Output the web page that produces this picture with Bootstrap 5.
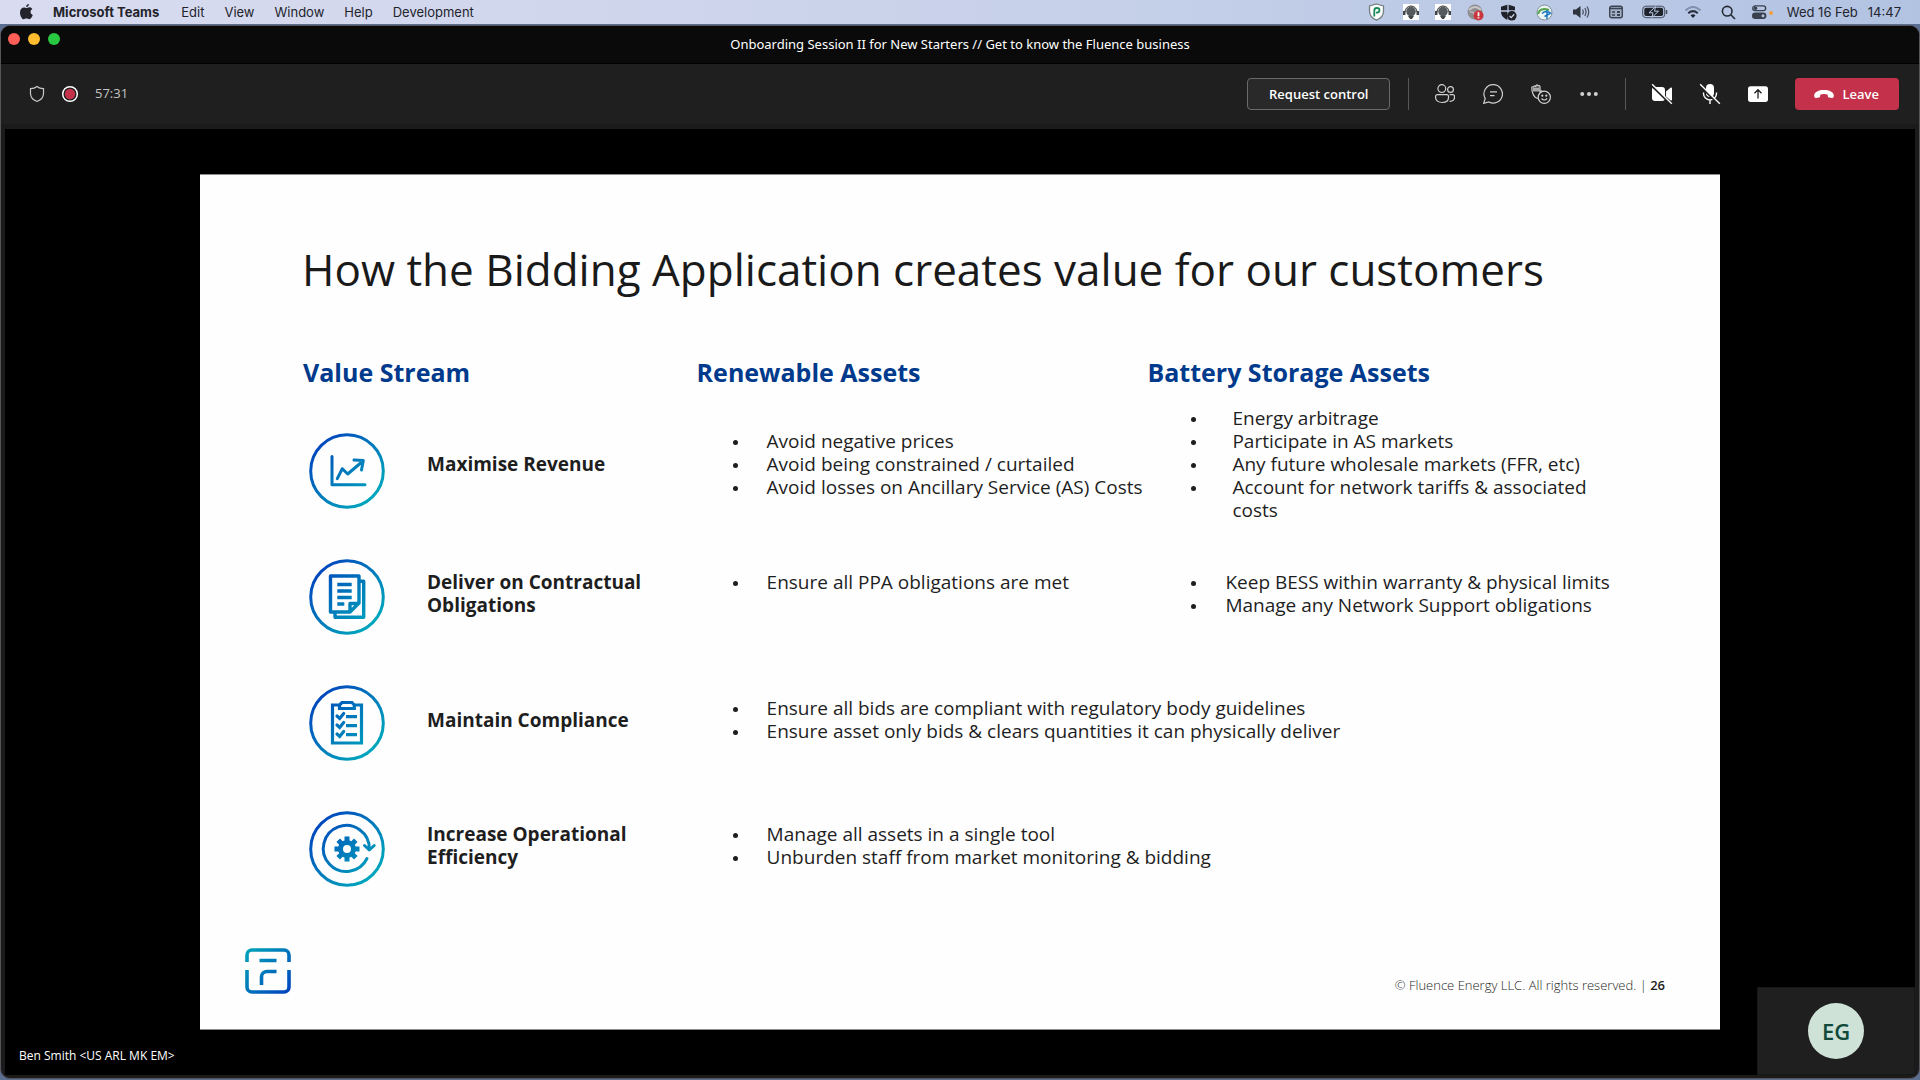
<!DOCTYPE html>
<html lang="en">
<head>
<meta charset="utf-8">
<meta name="viewport" content="width=device-width, initial-scale=1">
<title>Onboarding Session II for New Starters</title>
<link href="https://cdn.jsdelivr.net/npm/bootstrap@5.3.0/dist/css/bootstrap.min.css" rel="stylesheet">
<style>
body { font-family: "Open Sans", "Noto Sans", sans-serif; background: #5b6f93; }
.mac-menu { height: 24px; padding: 0 19px 0 18px; background: linear-gradient(90deg, #d9dcf0, #c9d2ea 50%, #b2c3e2); font: 13px/24px Inter, sans-serif; color: #23242b; }
.mac-menu nav { gap: 20px; margin-left: 19px; }
.mac-menu a { color: inherit; text-decoration: none; }
.mac-menu a.fw-bold { margin-right: 2px; }
.mac-menu svg { display: block; }
.mac-status { gap: 16px; }
.mac-status .near { margin-left: 3px; }
.mac-status .guard { margin-right: 2px; }
.mac-clock { gap: 10px; margin-left: -2px; }
.app-window { background: #1b1b1b; border: 1px solid #55565a; border-radius: 10px; margin-top: 1px; overflow: hidden; }
.title-strip { height: 38px; background: #0a0a0a; border-bottom: 1px solid #000; font-family: "Noto Sans", sans-serif; font-size: 13px; color: #fff; }
.lights { left: 7px; top: 7px; gap: 8px; }
.lights button { width: 12px; height: 12px; border: 0; padding: 0; border-radius: 50%; }
.call-bar { height: 60px; padding: 0 20px 0 28px; background: #1f1f1f; font-size: 13px; color: #c4c4c4; }
.tool-btn { width: 48px; height: 32px; padding: 0; border: 0; background: none; color: #d0d0d0; display: flex; align-items: center; justify-content: center; }
.tool-btn.solid { color: #fff; }
.rule { width: 1px; height: 32px; background: #575757; margin: 0 12px; }
.btn-request, .btn-leave { height: 32px; font-size: 13px; font-weight: 600; line-height: 16px; border-radius: 4px; color: #fff; }
.btn-request { padding: 0 21px; background: #292929; border: 1px solid #6a6a6a; margin-right: 6px; }
.btn-leave { padding: 0 20px 0 19px; background: #c4314b; border: 0; margin-left: 13px; }
.stage { background: #000; margin: 5px 4px 3px; padding-top: 45px; }
.slide { background: #fefefe; border: 1px solid #8c8c8c; border-width: 1px 0; margin: 0 195px; padding: 64px 55px 35px 45px; color: #1e1e1e; }
.slide h1 { font-size: 44px; line-height: 60px; font-weight: 400; margin: 0 0 55px 57px; color: #1a1a1a; }
.streams { width: calc(100% - 58px); margin-left: 58px; table-layout: fixed; font-size: 19px; line-height: 23px; }
.streams th, .streams td { padding: 0 0 6px; vertical-align: middle; }
.streams thead th { font-size: 25px; line-height: 36px; padding-bottom: 14px; color: #003a8c; }
.streams tbody tr { height: 126px; }
.streams tbody tr.first { height: 130px; }
.streams tr.first td, .streams tr.first th { padding-bottom: 10px; }
.streams th.stream-head, .streams tr.first th.stream-head { padding: 0; }
.stream-head svg { width: 76px; height: 76px; margin: 0 42px 0 6px; flex: none; }
.stream-head span { padding-bottom: 6px; }
.first .stream-head svg { margin-top: 4px; }
.first .stream-head span { padding-bottom: 10px; }
.points { list-style: none; margin: 0 0 0 36px; padding: 0; min-height: 46px; }
.points li { position: relative; padding-left: 34px; }
.points li::before { content: ""; position: absolute; left: 0; top: 10px; width: 5px; height: 5px; border-radius: 50%; background: #1e1e1e; }
.points.wide { margin-left: 44px; }
.points.wide li { padding-left: 41px; }
.points.mid { margin-left: 44px; }
.slide-foot { margin-top: 36px; font-size: 13px; line-height: 18px; font-weight: 300; }
.speaker { font-size: 12px; line-height: 16px; padding: 18px 14px 11px; color: #fff; }
.self-view { right: 0; bottom: 0; width: 158px; height: 88px; background: #1f1f1f; border: 1px solid #171717; }
.avatar { width: 56px; height: 56px; border-radius: 50%; background: #cfe2d8; color: #10493a; font-size: 22px; font-weight: 600; }
</style>
<script src="https://cdn.jsdelivr.net/npm/bootstrap@5.3.0/dist/js/bootstrap.bundle.min.js"></script>
</head>
<body>
<svg width="0" height="0" class="position-absolute" aria-hidden="true"><defs>
<linearGradient id="ring" gradientUnits="userSpaceOnUse" x1="10" y1="10" x2="66" y2="66"><stop offset="0" stop-color="#0045bd"/><stop offset=".5" stop-color="#007abb"/><stop offset="1" stop-color="#00a9bd"/></linearGradient>
<linearGradient id="brand" gradientUnits="userSpaceOnUse" x1="2" y1="2" x2="44" y2="44"><stop offset="0" stop-color="#00a3b8"/><stop offset=".5" stop-color="#0075bb"/><stop offset="1" stop-color="#0044c0"/></linearGradient>
</defs></svg>

<header class="mac-menu d-flex align-items-center justify-content-between">
  <div class="d-flex align-items-center">
    <svg width="16" height="18" viewBox="0 0 16 18" fill="#23242b"><path d="M10.900 1c.1 1.600-1.300 3.100-2.800 3.100C7.900 2.600 9.300 1.200 10.900 1zM8.300 5.100c.8 0 1.600-.8 3-.8 1.200 0 2.400.7 3 1.700-2.600 1.600-2.200 4.900.5 6-.6 1.700-2 4.200-3.500 4.200-1.100 0-1.400-.7-2.800-.7s-1.800.7-2.800.7C4 16.200 2 12.600 2 9.400c0-3.300 2.100-5 4-5 1.200 0 1.800.7 2.300.7z"/></svg>
    <nav class="d-flex">
      <a href="#" class="fw-bold">Microsoft Teams</a><a href="#">Edit</a><a href="#">View</a><a href="#">Window</a><a href="#">Help</a><a href="#">Development</a>
    </nav>
  </div>
  <div class="mac-status d-flex align-items-center">
    <svg class="guard" width="17" height="18" viewBox="0 0 17 18"><path d="M8.500 1l7 2v5c0 4.500-3 7.500-7 9.200C4.500 15.500 1.500 12.500 1.500 8V3z" fill="#fff" stroke="#74807f" stroke-width="1.300"/><path d="M6.300 13.500V7.500Q6.300 5 8.800 5q2.700 0 2.700 2.200 0 2.500-3.500 2.500" fill="none" stroke="#178a5a" stroke-width="1.800"/></svg>
    <svg width="16" height="16" viewBox="0 0 16 16"><path fill="#fff" d="M0 0h16v16H0z"/><circle cx="8" cy="7.500" r="4.800" fill="#555a5f"/><path d="M2 8a6 6 0 0112 0" fill="none" stroke="#333" stroke-width="1"/><path d="M0 7h2.500v4H0zM13.500 7H16v4h-2.500zM5 12h6l-2 3H7z" fill="#41464a"/></svg>
    <svg width="16" height="16" viewBox="0 0 16 16"><path fill="#fff" d="M0 0h16v16H0z"/><circle cx="8" cy="7.500" r="4.800" fill="#555a5f"/><path d="M2 8a6 6 0 0112 0" fill="none" stroke="#333" stroke-width="1"/><path d="M0 7h2.500v4H0zM13.500 7H16v4h-2.500zM5 12h6l-2 3H7z" fill="#41464a"/></svg>
    <svg width="17" height="17" viewBox="0 0 17 17"><circle cx="8" cy="8" r="7.500" fill="#8e8d90"/><path d="M2 6q6-6 12 0" stroke="#c8c7ca" stroke-width="2" fill="none"/><path d="M3 8h3l1 3 2-4" stroke="#ccc" fill="none"/><circle cx="11.500" cy="11.500" r="5" fill="#c9353d"/><path d="M11.500 8.300v4M11.500 13.300v1.300" stroke="#fff" stroke-width="1.700"/></svg>
    <svg width="17" height="17" viewBox="0 0 17 17"><path d="M8 .5l7 2.300V8H1V2.800zM1 8c.3 4 3 6.500 7 8V8z" fill="#202229"/><path d="M8 0v16M0 7h15" stroke="#bdcae6" stroke-width="1.300"/><circle cx="11.800" cy="11.800" r="4.800" fill="#202229"/><path d="M9.600 12l1.600 1.600 3-3.300" stroke="#cbd5eb" stroke-width="1.300" fill="none"/></svg>
    <svg class="near" width="17" height="17" viewBox="0 0 17 17"><circle cx="8.500" cy="8.500" r="7.500" fill="#edf5f2" stroke="#7e9299"/><path d="M2 10Q4 3 13 6" stroke="#5aa552" stroke-width="2.200" fill="none"/><path d="M6 9.500q4-4 9.500 0M11 6v9M8.500 12.500l5.500-3" stroke="#1b78c2" stroke-width="1.500" fill="none"/></svg>
    <svg class="near" width="18" height="16" viewBox="0 0 18 16"><path d="M1 5.500h3L8.500 2v12L4 10.500H1z" fill="#2d323c"/><path d="M10.500 5.500q1.500 2.500 0 5M12.800 4q2.500 4 0 8M15 2.500q3.500 5.500 0 11" stroke="#434b5b" stroke-width="1.200" fill="none"/></svg>
    <svg class="near" width="14" height="14" viewBox="0 0 14 14"><rect x=".7" y="1.200" width="12.600" height="11.600" rx="2" fill="#a2afc9" stroke="#3b4250" stroke-width="1.400"/><path d="M1 3.500h12M3 7h3M3 10h3" stroke="#3b4250" stroke-width="1.500"/><path d="M8 6h3v2H8zM8 9h3v2H8z" fill="#3b4250"/></svg>
    <svg class="near" width="26" height="14" viewBox="0 0 26 14"><rect x=".7" y="1.200" width="22" height="11.500" rx="3.200" fill="none" stroke="#444c5a"/><rect x="2.300" y="2.800" width="18.800" height="8.300" rx="1.800" fill="#1f232c"/><path d="M13.500 1.500L7 7.800h4L10 12.500l6.500-6.300h-4z" fill="#1f232c" stroke="#b9c8e4"/><path d="M24.500 5v4" stroke="#444c5a" stroke-width="1.500"/></svg>
    <svg width="18" height="14" viewBox="0 0 18 14" fill="none" stroke-width="2"><path d="M1.500 5.500q7.500-7 15 0" stroke="#8090ad"/><path d="M4.200 8.300q4.800-4.300 9.600 0" stroke="#2b3342"/><path d="M6.500 10.300q2.500-2 5 0L9 13z" fill="#202631" stroke="none"/></svg>
    <svg class="near" width="15" height="15" viewBox="0 0 15 15" fill="none" stroke="#242a35" stroke-width="1.600"><circle cx="6.200" cy="6.200" r="4.800"/><path d="M9.800 9.800L14 14"/></svg>
    <svg width="21" height="14" viewBox="0 0 21 14"><rect x=".7" y=".9" width="13" height="4.800" rx="2.400" fill="none" stroke="#39414f" stroke-width="1.300"/><circle cx="3.500" cy="3.300" r="1.800" fill="#39414f"/><rect y="7.500" width="14.400" height="6.500" rx="3.200" fill="#39414f"/><circle cx="11" cy="10.700" r="1.500" fill="#b4c4e1"/><circle cx="19" cy="8" r="2" fill="#f0a03a"/></svg>
    <span class="mac-clock d-flex"><span>Wed 16 Feb</span><span>14:47</span></span>
  </div>
</header>

<main class="app-window">
  <div class="title-strip position-relative d-flex align-items-center justify-content-center">
    <div class="lights position-absolute d-flex">
      <button type="button" aria-label="Close" style="background:#ff5f57"></button><button type="button" aria-label="Minimise" style="background:#febc2e"></button><button type="button" aria-label="Zoom" style="background:#28c840"></button>
    </div>
    <span>Onboarding Session II for New Starters // Get to know the Fluence business</span>
  </div>

  <div class="call-bar d-flex align-items-center justify-content-between">
    <div class="d-flex align-items-center">
      <svg width="16" height="18" viewBox="0 0 16 18" fill="none" stroke="#c8c8c8" stroke-width="1.200"><path d="M8 1.500c1.800 1.500 4 2.100 6.500 2.200V8.500c0 4-2.700 6.500-6.500 8-3.800-1.500-6.500-4-6.500-8V3.700C4 3.600 6.200 3 8 1.500z"/></svg>
      <svg class="mx-3" width="18" height="18" viewBox="0 0 18 18"><circle cx="9" cy="9" r="7.300" fill="none" stroke="#fff" stroke-width="1.500"/><circle cx="9" cy="9" r="5.200" fill="#c4314b"/></svg>
      <span>57:31</span>
    </div>
    <div class="d-flex align-items-center">
      <button type="button" class="btn-request">Request control</button>
      <span class="rule"></span>
      <button type="button" class="tool-btn" aria-label="People"><svg width="20" height="20" viewBox="0 0 20 20" fill="none" stroke="currentColor" stroke-width="1.200"><circle cx="6.800" cy="4.600" r="3.900"/><circle cx="15.500" cy="5.500" r="2.900"/><path d="M2.300 10.600h9.500a1.700 1.700 0 011.700 1.700v1.200c0 3-2.500 5-6.300 5S.6 16.500.6 13.500v-1.200a1.700 1.700 0 011.700-1.700zM14.600 10.600h3.200a1.700 1.700 0 011.700 1.700v1c0 2.700-1.800 4.200-5 4"/></svg></button>
      <button type="button" class="tool-btn" aria-label="Chat"><svg width="20" height="20" viewBox="0 0 20 20" fill="none" stroke="currentColor" stroke-width="1.200"><path d="M10.300.7a9.200 9.200 0 11-4.400 17.300L.7 19.300l1.500-4.800A9.200 9.200 0 0110.300.7zM7 7.800h7M7 11.600h4.500"/></svg></button>
      <button type="button" class="tool-btn" aria-label="Reactions"><svg width="20" height="20" viewBox="0 0 20 20" fill="none" stroke="currentColor" stroke-width="1.200"><path d="M7 14.500c-2.500-.5-4-2-5-4.500-.8-2-1.200-4-1.200-6.500 0-1 1.600-1 1.800 0 0-2 2-2 2.200-.5C5 .2 7 .2 7 2.500c.2-1.300 2-1.300 2 .3v4.700c1-1 2.500-.8 2 .3"/><path d="M2 3.500h7v4H2z" fill="#a8a8a8" stroke="none"/><circle cx="13.300" cy="13.300" r="6.100" fill="#1f1f1f"/><path d="M10.500 14.500q2.800 3 5.600 0"/><circle cx="11.300" cy="11.700" r=".5" fill="currentColor"/><circle cx="15.300" cy="11.700" r=".5" fill="currentColor"/></svg></button>
      <button type="button" class="tool-btn" aria-label="More actions"><svg width="20" height="20" viewBox="0 0 20 20" fill="currentColor"><circle cx="3.200" cy="10" r="2"/><circle cx="10" cy="10" r="2"/><circle cx="16.800" cy="10" r="2"/></svg></button>
      <span class="rule"></span>
      <button type="button" class="tool-btn solid" aria-label="Turn camera on"><svg width="22" height="22" viewBox="0 0 22 22"><path d="M3.500 4h7.500a3 3 0 013 3v8a3 3 0 01-3 3H4a3 3 0 01-3-3V6.500A2.500 2.500 0 013.500 4zM15 8.500l4.500-3.800c.7-.5 1.500-.2 1.500.6v11.400c0 .8-.8 1.100-1.500.6L15 13.500z" fill="currentColor"/><path d="M.5 2.500l20 19.500" stroke="#1f1f1f" stroke-width="2"/><path d="M1.200 1.300l19.600 19.400" stroke="currentColor" stroke-width="1.400"/></svg></button>
      <button type="button" class="tool-btn solid" aria-label="Unmute"><svg width="22" height="22" viewBox="0 0 22 22"><rect x="7" y="1" width="8" height="13" rx="4" fill="currentColor"/><path d="M4.500 9.500v1a6.500 6.500 0 0013 0v-1M11 17v4" stroke="currentColor" stroke-width="1.400" fill="none"/><path d="M.5 2.500l20 19.500" stroke="#1f1f1f" stroke-width="2"/><path d="M1.200 1.300l19.600 19.400" stroke="currentColor" stroke-width="1.400"/></svg></button>
      <button type="button" class="tool-btn solid" aria-label="Share"><svg width="20" height="20" viewBox="0 0 20 20"><rect y="2.300" width="20" height="15.600" rx="2.600" fill="currentColor"/><path d="M10 14.500V6M6.500 9.200L10 5.700l3.500 3.500" fill="none" stroke="#1f1f1f" stroke-width="1.300"/></svg></button>
      <button type="button" class="btn-leave d-flex align-items-center gap-2"><svg width="20" height="10" viewBox="0 0 20 10" fill="#fff"><path d="M10 1c5.500 0 9.500 2 9.800 5.200.1 1.700-.5 3-2 2.800l-2.500-.5c-1-.2-1.400-.7-1.500-1.600l-.2-1.400c-2.300-.7-4.900-.7-7.200 0l-.2 1.400c-.1.900-.5 1.400-1.500 1.600L2.200 9C.7 9.200.1 7.900.2 6.200.5 3 4.500 1 10 1z"/></svg>Leave</button>
    </div>
  </div>

  <section class="stage position-relative">
    <article class="slide">
      <h1>How the Bidding Application creates value for our customers</h1>
      <table class="streams">
        <colgroup><col style="width:28.900%"><col style="width:33.100%"><col></colgroup>
        <thead><tr><th scope="col">Value Stream</th><th scope="col">Renewable Assets</th><th scope="col">Battery Storage Assets</th></tr></thead>
        <tbody>
          <tr class="first">
            <th scope="row" class="stream-head"><div class="d-flex align-items-center">
              <svg viewBox="0 0 76 76" fill="none" stroke="url(#ring)" stroke-width="3" stroke-linecap="round"><circle cx="38" cy="38" r="36.300"/><path d="M23 23.500v28.200h33M28.300 45.700l5-10 5.400 5.300L54 28M45 27l9.300.5-1.800 9.500" stroke-linejoin="round"/></svg>
              <span>Maximise Revenue</span></div></th>
            <td><ul class="points"><li>Avoid negative prices</li><li>Avoid being constrained / curtailed</li><li>Avoid losses on Ancillary Service (AS) Costs</li></ul></td>
            <td><ul class="points wide"><li>Energy arbitrage</li><li>Participate in AS markets</li><li>Any future wholesale markets (FFR, etc)</li><li>Account for network tariffs &amp; associated<br>costs</li></ul></td>
          </tr>
          <tr>
            <th scope="row" class="stream-head"><div class="d-flex align-items-center">
              <svg viewBox="0 0 76 76" fill="none" stroke="url(#ring)" stroke-width="3.400"><circle cx="38" cy="38" r="36.300" stroke-width="3"/><path d="M50 44V17H21.500v36H41zM41 53v-8.500h9M50 22.300h4.700v36H26V53M28.300 25.500h14.400M28.300 32h14.400M28.300 38.500h14.400M28.300 45h7" stroke-linejoin="round"/></svg>
              <span>Deliver on Contractual<br>Obligations</span></div></th>
            <td><ul class="points"><li>Ensure all PPA obligations are met</li></ul></td>
            <td><ul class="points mid"><li>Keep BESS within warranty &amp; physical limits</li><li>Manage any Network Support obligations</li></ul></td>
          </tr>
          <tr>
            <th scope="row" class="stream-head"><div class="d-flex align-items-center">
              <svg viewBox="0 0 76 76" fill="none" stroke="url(#ring)" stroke-width="3.200"><circle cx="38" cy="38" r="36.300" stroke-width="3"/><path d="M30.500 20h-7v38h29V20h-7M33 17.500h10l2.300 2.500v3.500H30.500V20zM37 31.700h11M37 40.700h11M37 49.700h11"/><path d="M28 31l2.700 2.500 4-5M28 40l2.700 2.500 4-5M28 49l2.700 2.500 4-5" stroke-linecap="round"/></svg>
              <span>Maintain Compliance</span></div></th>
            <td colspan="2"><ul class="points"><li>Ensure all bids are compliant with regulatory body guidelines</li><li>Ensure asset only bids &amp; clears quantities it can physically deliver</li></ul></td>
          </tr>
          <tr>
            <th scope="row" class="stream-head"><div class="d-flex align-items-center">
              <svg viewBox="0 0 76 76" fill="none" stroke="url(#ring)" stroke-width="3"><circle cx="38" cy="38" r="36.300"/><path d="M58 47.500A23 23 0 1160.300 38M55.500 34.500l4.800 4.500 4.900-4.500" stroke-linecap="round" stroke-linejoin="round"/><circle cx="38" cy="38" r="6.500" stroke-width="5"/><path d="M38 25.500v6M38 44.500v6M25.500 38h6M44.500 38h6M29.200 29.200l4 4M42.800 42.800l4 4M46.800 29.200l-4 4M33.200 42.800l-4 4" stroke-width="5"/></svg>
              <span>Increase Operational<br>Efficiency</span></div></th>
            <td colspan="2"><ul class="points"><li>Manage all assets in a single tool</li><li>Unburden staff from market monitoring &amp; bidding</li></ul></td>
          </tr>
        </tbody>
      </table>
      <footer class="slide-foot d-flex justify-content-between align-items-end">
        <svg width="46" height="46" viewBox="0 0 46 46" fill="none" stroke="url(#brand)" stroke-width="3.600"><path d="M2 14V7a5 5 0 015-5h32a5 5 0 015 5v7M2 22v17a5 5 0 005 5h32a5 5 0 005-5V22M14.500 12.500H31.500M31.500 23.500h-9.500a5.500 5.500 0 00-5.500 5.500v8"/></svg>
        <span>© Fluence Energy LLC. All rights reserved. | <span class="fw-semibold">26</span></span>
      </footer>
    </article>
    <div class="speaker">Ben Smith &lt;US ARL MK EM&gt;</div>
    <aside class="self-view position-absolute d-flex align-items-center justify-content-center"><div class="avatar d-flex align-items-center justify-content-center">EG</div></aside>
  </section>
</main>
</body>
</html>
